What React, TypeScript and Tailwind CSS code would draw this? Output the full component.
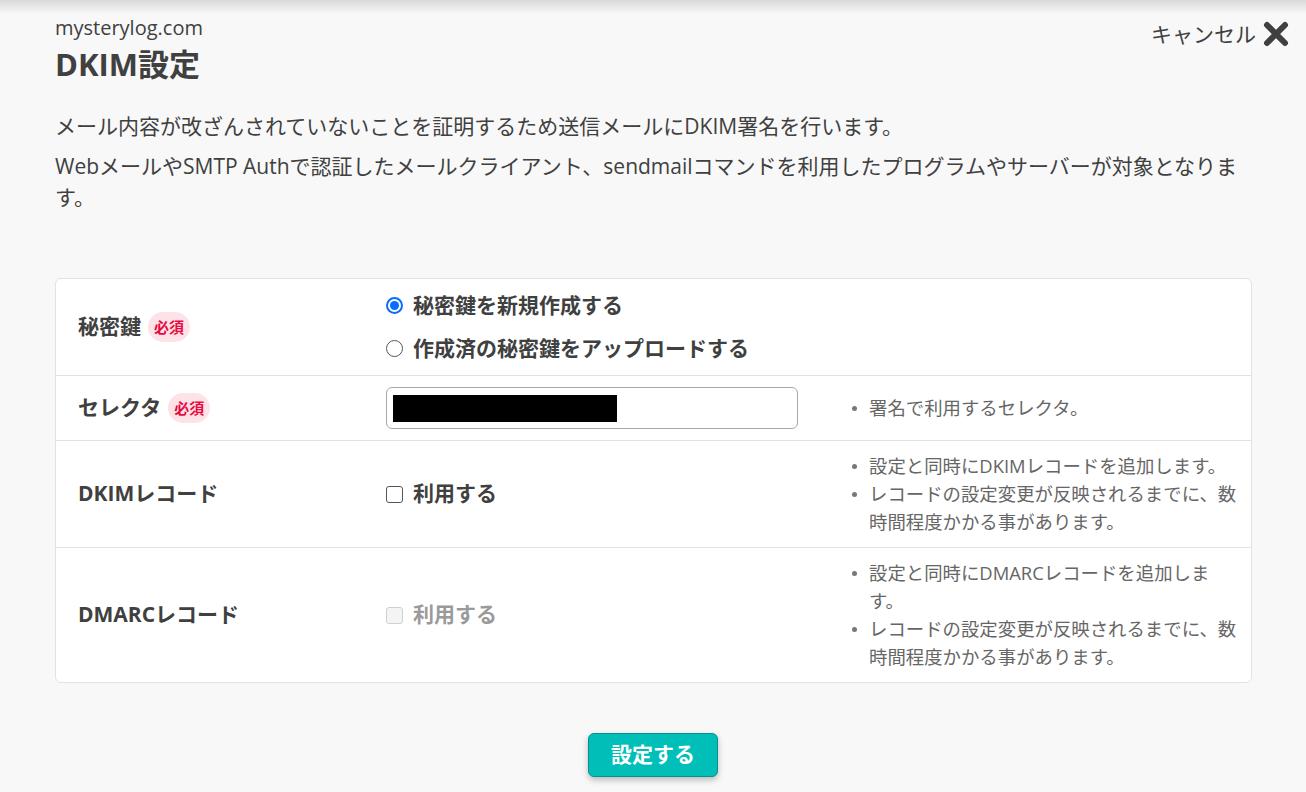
import React from "react"

const font = { fontFamily: '"Open Sans", "Noto Sans CJK JP", sans-serif' }

function Badge() {
  return (
    <span className="ml-[7px] inline-flex h-[30px] w-[42px] items-center justify-center rounded-full bg-[#fde3e8] text-[15px] font-bold text-[#e8093f]">
      必須
    </span>
  )
}

function Radio({ checked, label }: { checked?: boolean; label: string }) {
  return (
    <div className="flex h-[31px] items-center">
      {checked ? (
        <span className="flex h-[17px] w-[17px] items-center justify-center rounded-full border-[2px] border-[#0a6cff] bg-white">
          <span className="h-[9px] w-[9px] rounded-full bg-[#0a6cff]" />
        </span>
      ) : (
        <span className="h-[17px] w-[17px] rounded-full border-[1.5px] border-[#555] bg-white" />
      )}
      <span className="ml-[10px] text-[21px] font-bold text-[#404040]">{label}</span>
    </div>
  )
}

function Check({ disabled }: { disabled?: boolean }) {
  return (
    <div className="flex items-center">
      <span
        className={
          disabled
            ? "h-[17px] w-[17px] rounded-[3px] border-[1.5px] border-[#d0d0d0] bg-[#f4f4f4]"
            : "h-[17px] w-[17px] rounded-[3px] border-[1.5px] border-[#555] bg-white"
        }
      />
      <span className={`ml-[10px] text-[21px] font-bold ${disabled ? "text-[#9a9a9a]" : "text-[#404040]"}`}>
        利用する
      </span>
    </div>
  )
}

function Notes({ lines }: { lines: React.ReactNode[] }) {
  return (
    <ul className="py-[11px] pl-[20px] pr-[12px] text-[18.4px] leading-[28px] text-[#666]">
      {lines.map((l, i) => (
        <li key={i} className="relative">
          <span className="absolute left-[-17px] top-[12px] h-[5px] w-[5px] rounded-full bg-[#777]" />
          {l}
        </li>
      ))}
    </ul>
  )
}

const row = "grid grid-cols-[330px_463px_1fr] border-t border-[#e2e2e2]"
const labelCell = "flex items-center pl-[22px] text-[21px] font-bold text-[#404040]"

export default function App() {
  return (
    <div className="relative min-h-screen bg-[#f8f8f8] text-[#404040]" style={font}>
      <div className="pointer-events-none absolute inset-x-0 top-0 h-[14px] bg-gradient-to-b from-[#d9d9d9] to-transparent" />

      <div className="flex items-start justify-between pl-[55px] pr-[16px] pt-[16px]">
        <div>
          <p className="text-[20px] leading-[24px] text-[#404040]">mysterylog.com</p>
          <h1 className="mt-[6px] text-[31px] font-bold leading-[36px] text-[#404040]">DKIM設定</h1>
        </div>
        <button className="mt-[3px] flex items-center gap-[6px] text-[21px] leading-[30px] text-[#404040]">
          キャンセル
          <svg width="28" height="28" viewBox="0 0 28 28">
            <path d="M5 5L23 23M23 5L5 23" stroke="#404040" strokeWidth="6" strokeLinecap="round" />
          </svg>
        </button>
      </div>

      <div className="mt-[29px] pl-[55px] pr-[54px] text-[21px] leading-[31px] text-[#404040]">
        <p>メール内容が改ざんされていないことを証明するため送信メールにDKIM署名を行います。</p>
        <p className="mt-[9px]">
          WebメールやSMTP Authで認証したメールクライアント、sendmailコマンドを利用したプログラムやサーバーが対象となりま
          <br />
          す。
        </p>
      </div>

      <div className="ml-[55px] mr-[54px] mt-[65px] overflow-hidden rounded-[6px] border border-[#e2e2e2] bg-white">
        <div className="grid grid-cols-[330px_463px_1fr]">
          <div className={labelCell}>
            秘密鍵
            <Badge />
          </div>
          <div className="flex flex-col gap-[12px] py-[11px]">
            <Radio checked label="秘密鍵を新規作成する" />
            <Radio label="作成済の秘密鍵をアップロードする" />
          </div>
          <div />
        </div>

        <div className={row}>
          <div className={labelCell}>
            セレクタ
            <Badge />
          </div>
          <div className="py-[11px]">
            <div className="flex h-[42px] w-[412px] items-center rounded-[6px] border border-[#a8a8a8] bg-white px-[6px]">
              <span className="h-[27px] w-[224px] bg-black" />
            </div>
          </div>
          <div className="flex items-center">
            <Notes lines={["署名で利用するセレクタ。"]} />
          </div>
        </div>

        <div className={row}>
          <div className={labelCell}>DKIMレコード</div>
          <div className="flex items-center">
            <Check />
          </div>
          <Notes
            lines={[
              "設定と同時にDKIMレコードを追加します。",
              <>
                レコードの設定変更が反映されるまでに、数
                <br />
                時間程度かかる事があります。
              </>,
            ]}
          />
        </div>

        <div className={row}>
          <div className={labelCell}>DMARCレコード</div>
          <div className="flex items-center">
            <Check disabled />
          </div>
          <Notes
            lines={[
              <>
                設定と同時にDMARCレコードを追加しま
                <br />
                す。
              </>,
              <>
                レコードの設定変更が反映されるまでに、数
                <br />
                時間程度かかる事があります。
              </>,
            ]}
          />
        </div>
      </div>

      <div className="mt-[50px] flex justify-center pb-[20px]">
        <button className="h-[44px] w-[130px] rounded-[6px] border border-[#0b8f8c] bg-[#00bfb9] text-[21px] font-bold text-white shadow-[0_3px_6px_rgba(0,0,0,0.25)]">
          設定する
        </button>
      </div>
    </div>
  )
}
